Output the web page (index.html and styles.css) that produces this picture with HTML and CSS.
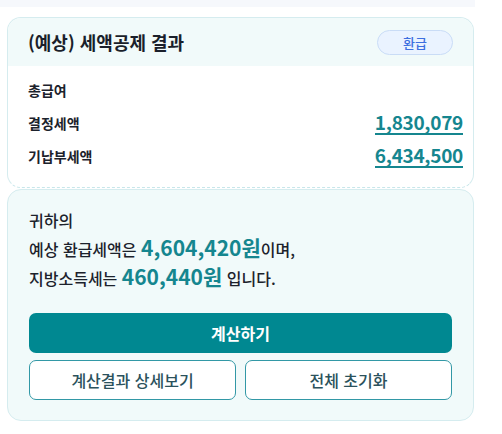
FILE: index.html
```html
<!DOCTYPE html>
<html lang="ko">
<head>
<meta charset="utf-8">
<link rel="stylesheet" href="styles.css">
</head>
<body>
<div class="topbar"></div>
<div class="wrap">
  <section class="card result">
    <header class="result-head">
      <h2 class="title">(예상) 세액공제 결과</h2>
      <span class="badge">환급</span>
    </header>
    <div class="result-body">
      <div class="row"><span class="label">총급여</span></div>
      <div class="row"><span class="label">결정세액</span><a class="amount">1,830,079</a></div>
      <div class="row"><span class="label">기납부세액</span><a class="amount">6,434,500</a></div>
    </div>
  </section>
  <section class="card summary">
    <p class="line">귀하의</p>
    <p class="line">예상 환급세액은 <strong class="hl">4,604,420원</strong>이며,</p>
    <p class="line">지방소득세는 <strong class="hl">460,440원</strong> 입니다.</p>
    <div class="actions">
      <button class="btn primary">계산하기</button>
      <div class="btn-row">
        <button class="btn outline">계산결과 상세보기</button>
        <button class="btn outline">전체 초기화</button>
      </div>
    </div>
  </section>
</div>
</body>
</html>
```
FILE: styles.css
```css
* { box-sizing: border-box; }
body {
  margin: 0;
  background: #ffffff;
  font-family: "Noto Sans CJK KR", "Noto Sans", sans-serif;
  color: #1c222c;
}
.topbar {
  width: 475px;
  height: 7px;
  background: #f6f8fc;
}
.wrap {
  width: 467px;
  margin-left: 7px;
  padding-top: 10px;
}
.card {
  border: 1px solid #d5ecef;
  border-radius: 14px;
}
.result {
  background: #ffffff;
  border-bottom: 1px dashed #c7e6ea;
  overflow: hidden;
}
.result-head {
  height: 48px;
  background: #f1fafa;
  display: flex;
  align-items: center;
  justify-content: space-between;
  padding: 0 20px;
}
.title {
  margin: 0;
  font-size: 18px;
  font-weight: 700;
  color: #1a1f2b;
}
.badge {
  width: 76px;
  height: 25px;
  border-radius: 13px;
  background: #eaf3ff;
  border: 1px solid #c9dcf6;
  color: #3d6fe0;
  font-size: 13px;
  font-weight: 500;
  display: flex;
  align-items: center;
  justify-content: center;
}
.result-body {
  padding: 7px 10px 15px 20px;
}
.row {
  height: 33px;
  display: flex;
  align-items: center;
  justify-content: space-between;
}
.label {
  font-size: 14px;
  font-weight: 700;
  color: #1c222c;
}
.amount {
  font-size: 19px;
  font-weight: 700;
  color: #15868f;
  line-height: 22px;
  border-bottom: 2px solid #15868f;
  letter-spacing: -0.3px;
}
.summary {
  margin-top: 1px;
  background: #f1fafa;
  padding: 17px 21px 20px 21px;
}
.line {
  margin: 0;
  font-size: 16px;
  font-weight: 500;
  line-height: 27px;
  color: #1c222c;
}
.hl {
  font-size: 21px;
  font-weight: 700;
  color: #15868f;
}
.actions {
  margin-top: 21px;
  display: flex;
  flex-direction: column;
  gap: 7px;
}
.btn {
  height: 40px;
  border-radius: 7px;
  font-family: inherit;
  font-size: 16px;
  cursor: pointer;
}
.primary {
  width: 100%;
  background: #008891;
  border: none;
  color: #ffffff;
  font-weight: 700;
}
.btn-row {
  display: flex;
  gap: 9px;
}
.outline {
  flex: 1;
  background: #ffffff;
  border: 1.5px solid #3298a6;
  color: #2b525c;
  font-weight: 500;
}
```
